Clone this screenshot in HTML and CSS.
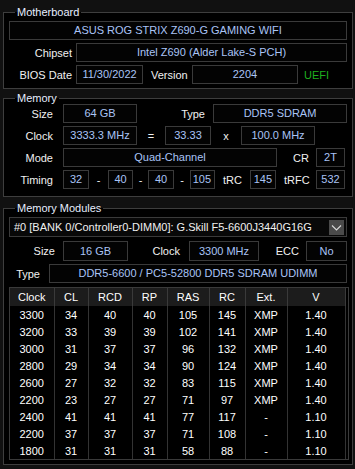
FILE: index.html
```html
<!DOCTYPE html>
<html lang="en">
<head>
    <meta charset="UTF-8">
    <meta name="viewport" content="width=device-width, initial-scale=1.0">
    <title>Memory</title>
    <link rel="stylesheet" href="styles.css">
</head>
<body>
    <div class="window">
        <fieldset class="group group-board">
            <legend>Motherboard</legend>
            <div class="row">
                <div class="field grow">ASUS ROG STRIX Z690-G GAMING WIFI</div>
            </div>
            <div class="row">
                <span class="label lbl-board">Chipset</span>
                <div class="field grow">Intel Z690 (Alder Lake-S PCH)</div>
            </div>
            <div class="row">
                <span class="label lbl-board">BIOS Date</span>
                <div class="field bios-date">11/30/2022</div>
                <span class="label lbl-version">Version</span>
                <div class="field bios-ver">2204</div>
                <span class="uefi">UEFI</span>
            </div>
        </fieldset>

        <fieldset class="group group-mem">
            <legend>Memory</legend>
            <div class="row">
                <span class="label lbl-mem">Size</span>
                <div class="field w74">64 GB</div>
                <span class="label lbl-type">Type</span>
                <div class="field grow">DDR5 SDRAM</div>
            </div>
            <div class="row">
                <span class="label lbl-mem">Clock</span>
                <div class="field w74">3333.3 MHz</div>
                <span class="sym sym-eq">=</span>
                <div class="field w46">33.33</div>
                <span class="sym sym-x">x</span>
                <div class="field w74">100.0 MHz</div>
            </div>
            <div class="row">
                <span class="label lbl-mem">Mode</span>
                <div class="field w214">Quad-Channel</div>
                <span class="label lbl-cr">CR</span>
                <div class="field w29">2T</div>
            </div>
            <div class="row">
                <span class="label lbl-mem">Timing</span>
                <div class="field w26">32</div>
                <span class="sym dash-1">-</span>
                <div class="field w25">40</div>
                <span class="sym dash-2">-</span>
                <div class="field w26">40</div>
                <span class="sym dash-3">-</span>
                <div class="field w25 num">105</div>
                <span class="label lbl-trc">tRC</span>
                <div class="field w26 num">145</div>
                <span class="label lbl-trfc">tRFC</span>
                <div class="field w29">532</div>
            </div>
        </fieldset>

        <fieldset class="group group-mods">
            <legend>Memory Modules</legend>
            <div class="select">
                <span>#0 [BANK 0/Controller0-DIMM0]: G.Skill F5-6600J3440G16G</span>
                <span class="select-btn">
                    <svg width="15" height="15" viewBox="0 0 15 15">
                        <polyline points="3,5.5 7.5,10 12,5.5" fill="none" stroke="#d8d8d8" stroke-width="1.1"/>
                    </svg>
                </span>
            </div>
            <div class="row row-size">
                <span class="label lbl-msize">Size</span>
                <div class="field w65">16 GB</div>
                <span class="label lbl-mclock">Clock</span>
                <div class="field w70">3300 MHz</div>
                <span class="label lbl-ecc">ECC</span>
                <div class="field grow">No</div>
            </div>
            <div class="row">
                <span class="label lbl-mtype">Type</span>
                <div class="field grow">DDR5-6600 / PC5-52800 DDR5 SDRAM UDIMM</div>
            </div>

            <div class="timings">
                <table>
                    <colgroup>
                        <col class="c44"><col class="c34"><col class="c44"><col class="c35">
                        <col class="c42"><col class="c36"><col class="c42"><col class="c58">
                    </colgroup>
                    <thead>
                        <tr><th>Clock</th><th>CL</th><th>RCD</th><th>RP</th><th>RAS</th><th>RC</th><th>Ext.</th><th>V</th></tr>
                    </thead>
                    <tbody>
                        <tr><td>3300</td><td>34</td><td>40</td><td>40</td><td>105</td><td>145</td><td>XMP</td><td>1.40</td></tr>
                        <tr><td>3200</td><td>33</td><td>39</td><td>39</td><td>102</td><td>141</td><td>XMP</td><td>1.40</td></tr>
                        <tr><td>3000</td><td>31</td><td>37</td><td>37</td><td>96</td><td>132</td><td>XMP</td><td>1.40</td></tr>
                        <tr><td>2800</td><td>29</td><td>34</td><td>34</td><td>90</td><td>124</td><td>XMP</td><td>1.40</td></tr>
                        <tr><td>2600</td><td>27</td><td>32</td><td>32</td><td>83</td><td>115</td><td>XMP</td><td>1.40</td></tr>
                        <tr><td>2200</td><td>23</td><td>27</td><td>27</td><td>71</td><td>97</td><td>XMP</td><td>1.40</td></tr>
                        <tr><td>2400</td><td>41</td><td>41</td><td>41</td><td>77</td><td>117</td><td>-</td><td>1.10</td></tr>
                        <tr><td>2200</td><td>37</td><td>37</td><td>37</td><td>71</td><td>108</td><td>-</td><td>1.10</td></tr>
                        <tr><td>1800</td><td>31</td><td>31</td><td>31</td><td>58</td><td>88</td><td>-</td><td>1.10</td></tr>
                    </tbody>
                </table>
            </div>
        </fieldset>
    </div>
</body>
</html>
```

FILE: styles.css
```css
body {
    margin: 0;
    background: #111;
    font-family: 'Liberation Sans', Arial, sans-serif;
    font-size: 11px;
    color: #f0f0f0;
}
.window {
    width: 355px;
    height: 469px;
    overflow: hidden;
}
.group {
    margin: 0 2px 0 3px;
    padding: 0 5px 4px 5px;
    border: 1px solid #3e3e3e;
    background: #000;
    min-inline-size: 0;
}
.group legend {
    margin-left: 6px;
    padding: 0 2px;
    line-height: 12px;
    color: #e6eeff;
}
.group-board {
    margin-top: 6px;
    padding-top: 3px;
}
.group-mem {
    margin-top: 3px;
    padding-bottom: 7px;
}
.group-mods {
    margin-top: 5px;
    padding-top: 3px;
    padding-bottom: 4px;
}
.row {
    display: flex;
    align-items: center;
    height: 19px;
    margin-bottom: 3px;
}
.row:last-child {
    margin-bottom: 0;
}
.field {
    box-sizing: border-box;
    height: 19px;
    line-height: 17px;
    border: 1px solid #3a3a3a;
    background: #030303;
    color: #aac4f6;
    text-align: center;
    white-space: nowrap;
    overflow: hidden;
}
.grow {
    flex: 1;
}
.label {
    box-sizing: border-box;
    flex: none;
    white-space: nowrap;
}
.sym {
    flex: none;
    text-align: center;
}

/* motherboard */
.lbl-board { width: 67px; text-align: right; padding-right: 4px; }
.lbl-version { width: 49px; padding-left: 8px; }
.bios-date { width: 67px; }
.bios-ver { width: 106px; }
.uefi {
    margin-left: 6px;
    color: #1fae1f;
}

/* memory */
.lbl-mem { width: 54px; text-align: right; padding-right: 10px; }
.lbl-type { width: 76px; text-align: right; padding-right: 8px; }
.lbl-cr { width: 39px; text-align: right; padding-right: 7px; }
.lbl-trc { width: 35px; padding-left: 8px; }
.lbl-trfc { width: 40px; padding-left: 8px; }
.sym-eq { width: 28px; }
.sym-x { width: 30px; }
.dash-1 { width: 19px; }
.dash-2 { width: 15px; }
.dash-3 { width: 16px; }
.num { text-align: right; padding-right: 3px; }
.w25 { width: 25px; }
.w26 { width: 26px; }
.w29 { width: 29px; }
.w46 { width: 46px; }
.w65 { width: 65px; }
.w70 { width: 70px; }
.w74 { width: 74px; }
.w214 { width: 214px; }

/* modules */
.select {
    box-sizing: border-box;
    display: flex;
    align-items: center;
    justify-content: space-between;
    height: 20px;
    padding: 0 2px 0 4px;
    border: 1px solid #3a3a3a;
    background: #080808;
    color: #f0f0f0;
    margin-bottom: 4px;
}
.select-btn {
    display: flex;
    width: 15px;
    height: 15px;
    background: #4a4a4a;
}
.row-size {
    height: 20px;
}
.row-size .field {
    height: 20px;
    line-height: 18px;
}
.lbl-msize { width: 54px; text-align: right; padding-right: 8px; }
.lbl-mclock { width: 61px; text-align: right; padding-right: 9px; }
.lbl-ecc { width: 47px; text-align: right; padding-right: 7px; }
.lbl-mtype { width: 40px; text-align: right; padding-right: 9px; }

.timings {
    box-sizing: border-box;
    width: 340px;
    margin-top: 4px;
    border: 1px solid #3a3a3a;
    background: #000;
}
.timings table {
    width: 335px;
    table-layout: fixed;
    border-collapse: collapse;
}
.c34 { width: 34px; }
.c35 { width: 35px; }
.c36 { width: 36px; }
.c42 { width: 42px; }
.c44 { width: 44px; }
.c58 { width: 58px; }
.timings th,
.timings td {
    padding: 0;
    text-align: center;
    border-right: 1px solid #333;
    color: #fff;
    font-weight: normal;
}
.timings th {
    height: 18px;
    background: #1c1c1c;
    border-right-color: #3a3a3a;
}
.timings td {
    height: 17px;
}
```
